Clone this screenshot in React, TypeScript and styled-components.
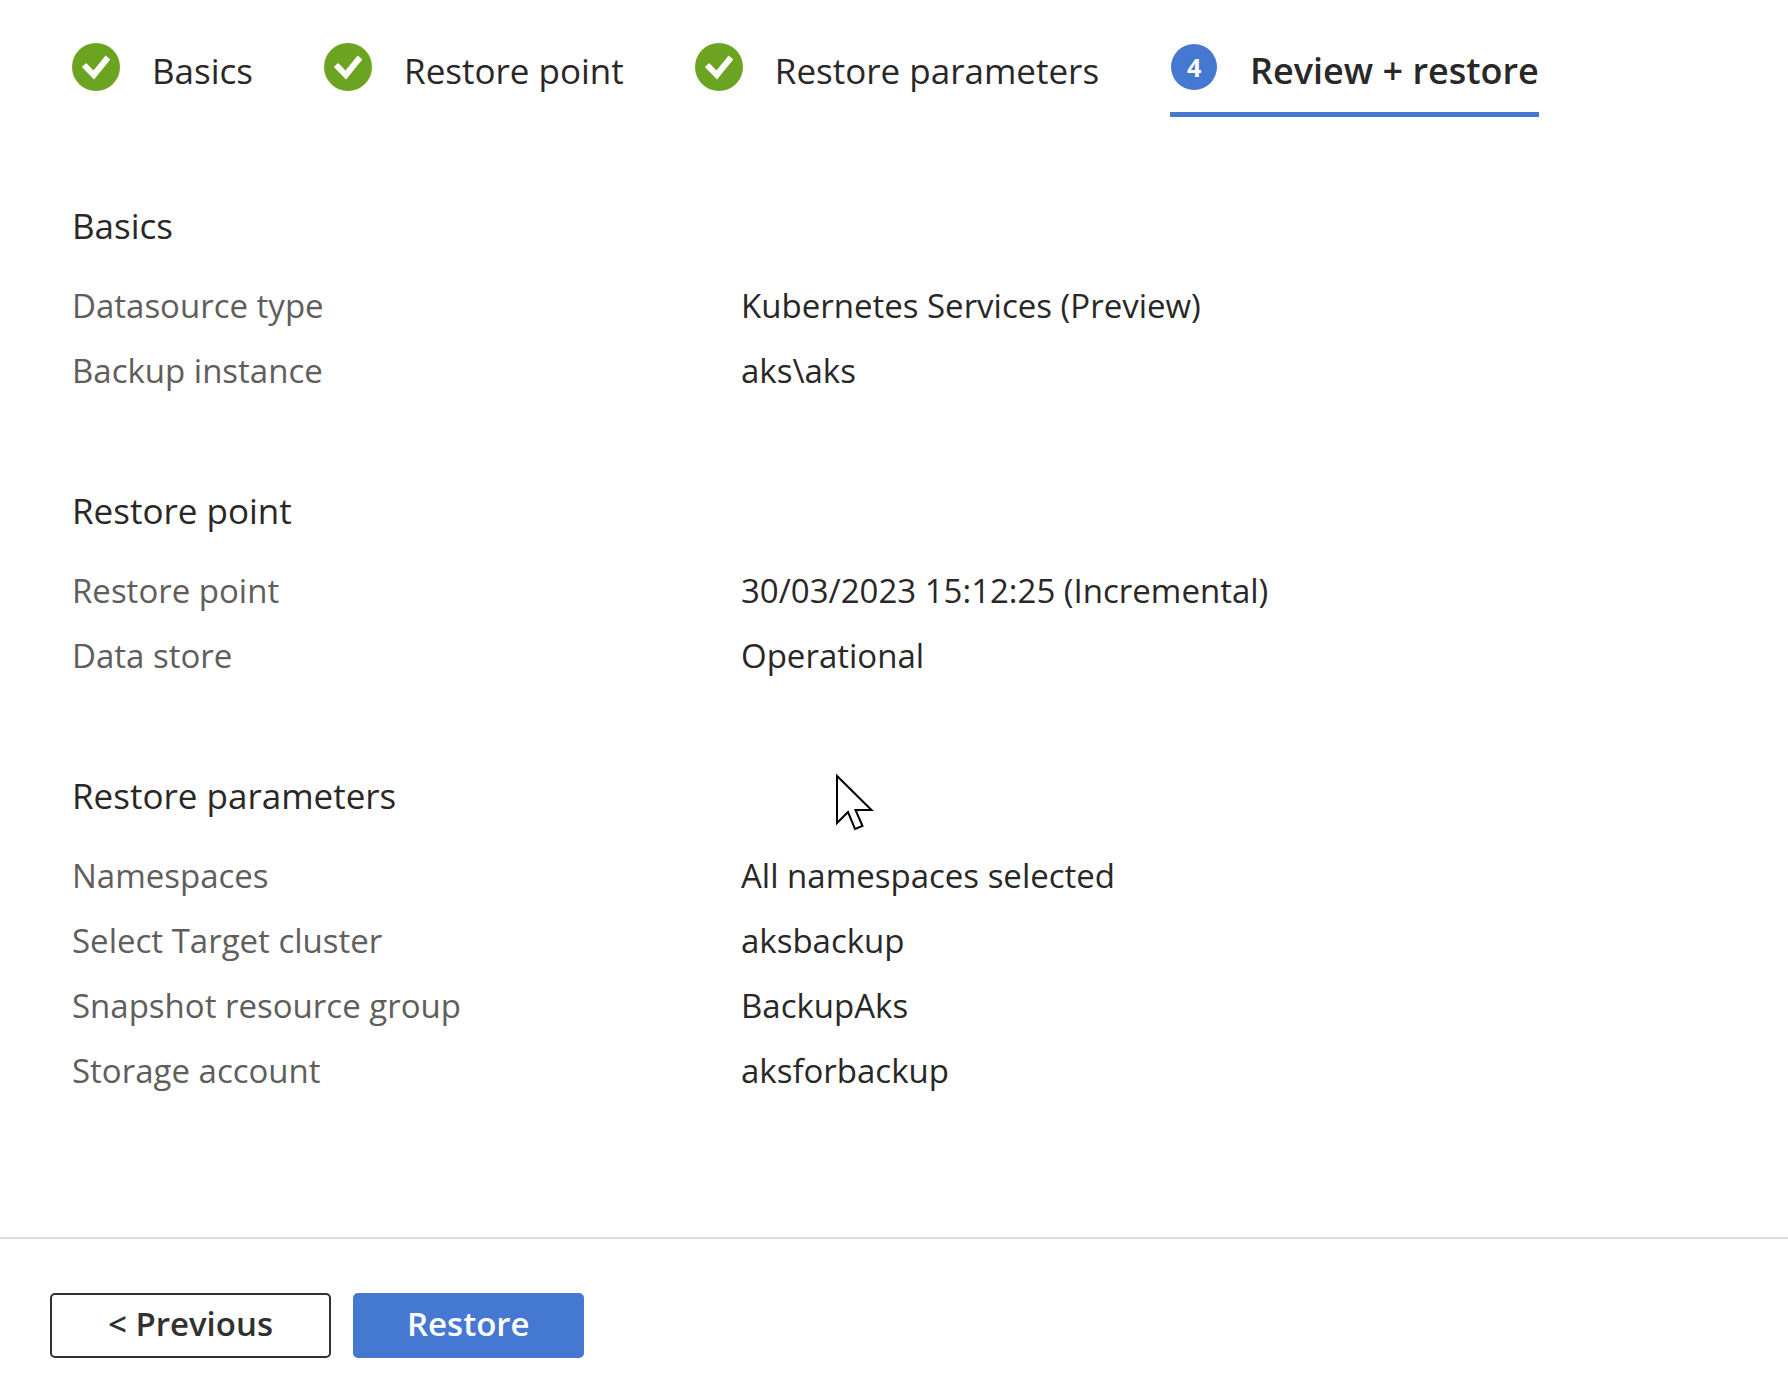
import React from "react";
import styled, { createGlobalStyle, css } from "styled-components";

const color = {
  text: "#292827",
  muted: "#605e5c",
  blue: "#4478d1",
  green: "#6ba421",
  line: "#dddddd",
};

const GlobalStyle = createGlobalStyle`
  *, *::before, *::after { box-sizing: border-box; }
  body {
    margin: 0;
    background: #ffffff;
    color: ${color.text};
    font-family: "Segoe UI", "Open Sans", "Noto Sans", sans-serif;
    font-size: 33px;
    line-height: 45px;
  }
`;

const Page = styled.main`
  position: relative;
  display: flex;
  flex-direction: column;
`;

const Steps = styled.nav`
  display: flex;
  gap: 71px;
  padding: 43px 72px 0;
`;

const Step = styled.a<{ $active?: boolean }>`
  display: flex;
  gap: 32px;
  height: 74px;
  color: ${color.text};
  font-size: 35px;
  line-height: 56px;
  white-space: nowrap;
  text-decoration: none;
  ${(p) =>
    p.$active &&
    css`
      font-size: 36px;
      font-weight: 600;
      border-bottom: 5px solid ${color.blue};
    `}
`;

const DoneIcon = styled.svg`
  flex: none;
  width: 48px;
  height: 48px;
`;

const StepNumber = styled.span`
  flex: none;
  width: 46px;
  height: 46px;
  margin: 1px;
  border-radius: 50%;
  background: ${color.blue};
  color: #ffffff;
  font-size: 25px;
  font-weight: 700;
  line-height: 46px;
  text-align: center;
`;

const Summary = styled.div`
  display: flex;
  flex-direction: column;
  gap: 93px;
  padding: 84px 72px 144px;
`;

const SectionTitle = styled.h2`
  margin: 0 0 32px;
  font-size: 35px;
  font-weight: 400;
  line-height: 50px;
`;

const Details = styled.dl`
  display: flex;
  flex-direction: column;
  gap: 20px;
  margin: 0;
`;

const Detail = styled.div`
  display: grid;
  grid-template-columns: 669px 1fr;
`;

const Label = styled.dt`
  color: ${color.muted};
`;

const Value = styled.dd`
  margin: 0;
`;

const Footer = styled.footer`
  display: flex;
  gap: 22px;
  padding: 54px 50px 41px;
  border-top: 2px solid ${color.line};
`;

const Button = styled.button<{ $primary?: boolean }>`
  height: 65px;
  padding: 0 ${(p) => (p.$primary ? 52 : 56)}px 5px;
  border: 2px solid ${(p) => (p.$primary ? color.blue : "#323130")};
  border-radius: 5px;
  background: ${(p) => (p.$primary ? color.blue : "#ffffff")};
  color: ${(p) => (p.$primary ? "#ffffff" : "#323130")};
  font: inherit;
  font-weight: 600;
  line-height: 45px;
  cursor: pointer;
`;

const Pointer = styled.svg`
  position: absolute;
  left: 834px;
  top: 772px;
  width: 42px;
  height: 60px;
  pointer-events: none;
`;

const steps = ["Basics", "Restore point", "Restore parameters"];

const sections = [
  {
    title: "Basics",
    rows: [
      ["Datasource type", "Kubernetes Services (Preview)"],
      ["Backup instance", "aks\\aks"],
    ],
  },
  {
    title: "Restore point",
    rows: [
      ["Restore point", "30/03/2023 15:12:25 (Incremental)"],
      ["Data store", "Operational"],
    ],
  },
  {
    title: "Restore parameters",
    rows: [
      ["Namespaces", "All namespaces selected"],
      ["Select Target cluster", "aksbackup"],
      ["Snapshot resource group", "BackupAks"],
      ["Storage account", "aksforbackup"],
    ],
  },
];

export default function App() {
  return (
    <>
      <GlobalStyle />
      <Page>
        <Steps aria-label="Restore steps">
          {steps.map((name) => (
            <Step key={name} href="#">
              <DoneIcon viewBox="0 0 48 48" aria-hidden="true">
                <circle cx="24" cy="24" r="24" fill={color.green} />
                <path
                  d="M12 22 21.800 32 36 14.500"
                  fill="none"
                  stroke="#ffffff"
                  strokeWidth="6"
                />
              </DoneIcon>
              {name}
            </Step>
          ))}
          <Step href="#" $active aria-current="step">
            <StepNumber>4</StepNumber>
            Review + restore
          </Step>
        </Steps>

        <Summary>
          {sections.map((section) => (
            <section key={section.title}>
              <SectionTitle>{section.title}</SectionTitle>
              <Details>
                {section.rows.map(([label, value]) => (
                  <Detail key={label}>
                    <Label>{label}</Label>
                    <Value>{value}</Value>
                  </Detail>
                ))}
              </Details>
            </section>
          ))}
        </Summary>

        <Footer>
          <Button type="button">&lt; Previous</Button>
          <Button type="button" $primary>
            Restore
          </Button>
        </Footer>

        <Pointer viewBox="0 0 42 60" aria-hidden="true">
          <path
            d="M3 4 V51 L14 40 L21 57 L28.500 54 L21.500 38 H37.500 Z"
            fill="#ffffff"
            stroke="#000000"
            strokeWidth="2"
          />
        </Pointer>
      </Page>
    </>
  );
}
